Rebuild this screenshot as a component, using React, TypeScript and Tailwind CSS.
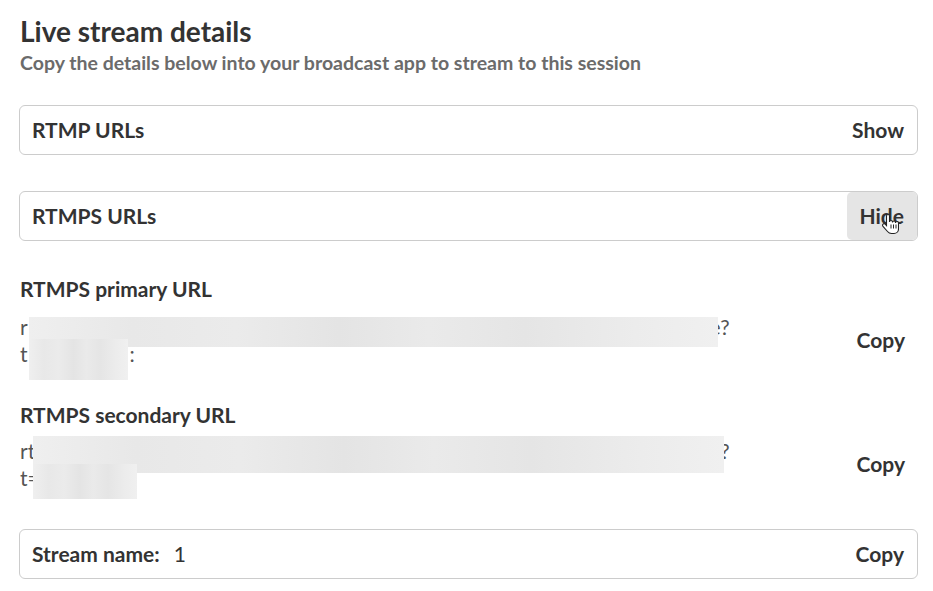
import React from "react";

const blurBg =
  "bg-[linear-gradient(90deg,#efefef_0%,#e8e8e8_15%,#ebebeb_30%,#e4e4e4_45%,#eaeaea_58%,#e5e5e5_72%,#ececec_88%,#f0f0f0_100%)]";

function HandCursor() {
  return (
    <svg
      width="17"
      height="23"
      viewBox="0 0 17 22"
      className="absolute left-[35px] top-[21px]"
    >
      <path
        d="M6 1c-.8 0-1.5.7-1.5 1.5V12L3.2 10.6c-.6-.6-1.6-.6-2.2 0s-.6 1.6 0 2.2L5.5 18c1 1.2 2.4 2 4 2h2.5c2.5 0 4.5-2 4.5-4.5V9.5c0-.8-.7-1.5-1.5-1.5s-1.5.7-1.5 1.5V9c0-.8-.7-1.5-1.5-1.5S10.5 8.2 10.5 9V8.5c0-.8-.7-1.5-1.5-1.5S7.5 7.7 7.5 8.5V2.5C7.5 1.7 6.8 1 6 1z"
        fill="#fff"
        stroke="#222"
        strokeWidth="1.1"
      />
      <path d="M9 11v4M11.5 11v4M14 11v4" stroke="#222" strokeWidth="1" />
    </svg>
  );
}

function ToggleBox({ label, action, active }: { label: string; action: string; active?: boolean }) {
  return (
    <div className="flex h-[50px] items-stretch rounded-[6px] border border-[#cccccc] bg-white">
      <div className="flex flex-1 items-center pl-[12px] text-[21px] font-bold text-[#333333]">
        {label}
      </div>
      <div
        className={
          active
            ? "relative flex items-center rounded-[5px] bg-[#e5e5e5] px-[13px] text-[21px] font-bold text-[#333333]"
            : "relative flex items-center px-[13px] text-[21px] font-bold text-[#333333]"
        }
      >
        {action}
        {active ? <HandCursor /> : null}
      </div>
    </div>
  );
}

export default function App() {
  return (
    <div className="h-[591px] w-[933px] overflow-hidden bg-white pl-[19px] pr-[15px] pt-[14px] font-['Lato','Noto_Sans',sans-serif]">
      <h1 className="pl-[1px] text-[28px] font-bold leading-[34px] text-[#333333]">
        Live stream details
      </h1>
      <p className="mt-[1px] pl-[1px] text-[19.5px] font-bold leading-[28px] text-[#6b6b6b]">
        Copy the details below into your broadcast app to stream to this session
      </p>

      <div className="mt-[28px]">
        <ToggleBox label="RTMP URLs" action="Show" />
      </div>
      <div className="mt-[36px]">
        <ToggleBox label="RTMPS URLs" action="Hide" active />
      </div>

      <div className="mt-[34px] pl-[1px] text-[21px] font-bold leading-[28px] text-[#333333]">
        RTMPS primary URL
      </div>
      <div className="mt-[10px] flex items-center">
        <div className="relative h-[54px] flex-1 text-[21px] leading-[27px] text-[#555555]">
          <div className="flex pl-[1px]">
            <span>r</span>
            <span className="ml-auto mr-[114px]">e?</span>
          </div>
          <div className="pl-[1px]">
            <span>t</span>
            <span className="ml-[102px]">:</span>
          </div>
          <div className={`absolute left-[10px] top-[4px] h-[30px] w-[689px] ${blurBg}`} />
          <div className={`absolute left-[10px] top-[26px] h-[41px] w-[99px] ${blurBg}`} />
        </div>
        <div className="px-[13px] text-[21px] font-bold text-[#333333]">Copy</div>
      </div>

      <div className="mt-[34px] pl-[1px] text-[21px] font-bold leading-[28px] text-[#333333]">
        RTMPS secondary URL
      </div>
      <div className="mt-[8px] flex items-center">
        <div className="relative h-[54px] flex-1 text-[21px] leading-[27px] text-[#555555]">
          <div className="flex pl-[1px]">
            <span>rt</span>
            <span className="ml-auto mr-[114px]">?</span>
          </div>
          <div className="pl-[1px]">
            <span>t=</span>
          </div>
          <div className={`absolute left-[14px] top-[-1px] h-[37px] w-[691px] ${blurBg}`} />
          <div className={`absolute left-[14px] top-[27px] h-[35px] w-[104px] ${blurBg}`} />
        </div>
        <div className="px-[13px] text-[21px] font-bold text-[#333333]">Copy</div>
      </div>

      <div className="mt-[38px] flex h-[50px] items-center rounded-[6px] border border-[#cccccc] bg-white">
        <div className="flex flex-1 items-center pl-[12px] text-[21px] text-[#333333]">
          <span className="font-bold">Stream name:</span>
          <span className="ml-[14px]">1</span>
        </div>
        <div className="px-[13px] text-[21px] font-bold text-[#333333]">Copy</div>
      </div>
    </div>
  );
}
